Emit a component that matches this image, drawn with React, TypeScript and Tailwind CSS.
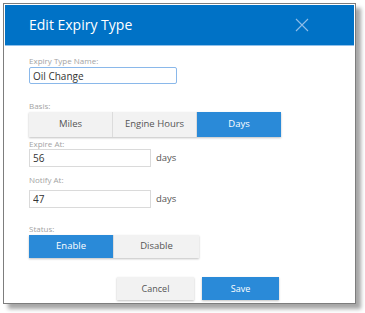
import { useState } from 'react'

const font = { fontFamily: '"Open Sans", "Noto Sans", sans-serif' }

function Segmented({ options, value, onChange, widths }: {
  options: string[]
  value: string
  onChange: (v: string) => void
  widths: string
}) {
  return (
    <div className="flex w-fit shadow-[0_1px_2px_rgba(0,0,0,0.25)]">
      {options.map((opt) => (
        <button
          key={opt}
          type="button"
          onClick={() => onChange(opt)}
          className={`${widths} text-[9.5px] border-r border-[#dcdcdc] last:border-r-0 ${
            value === opt ? 'bg-[#2a8ad8] text-white' : 'bg-[#f2f2f2] text-[#555]'
          }`}
        >
          {opt}
        </button>
      ))}
    </div>
  )
}

export default function App() {
  const [name, setName] = useState('Oil Change')
  const [basis, setBasis] = useState('Days')
  const [expire, setExpire] = useState('56')
  const [notify, setNotify] = useState('47')
  const [status, setStatus] = useState('Enable')

  return (
    <div className="w-[365px] h-[313px] bg-white pl-[3px] pt-[3px]" style={font}>
      <div className="w-[353px] h-[301px] border border-[#7d7d7d] p-px bg-white shadow-[5px_5px_4px_rgba(0,0,0,0.35)] flex flex-col">
        {/* header */}
        <div className="h-[41px] bg-[#0072c6] border-b border-[#8fc0ea] flex items-center justify-between pl-[24px] pr-[45px] shrink-0">
          <h2 className="text-white text-[14px] leading-none">Edit Expiry Type</h2>
          <button type="button" className="text-[#8fbde8]">
            <svg width="14" height="14" viewBox="0 0 14 14" stroke="currentColor" strokeWidth="1.1">
              <path d="M1 1L13 13M13 1L1 13" />
            </svg>
          </button>
        </div>

        <div className="px-[24px] flex flex-col">
          <label className="mt-[9px] text-[8px] leading-[11px] text-[#a3a3a3]">Expiry Type Name:</label>
          <input
            value={name}
            onChange={(e) => setName(e.target.value)}
            className="mt-px w-[148px] h-[17px] border border-[#8ab8ea] rounded-[2px] px-[3px] text-[10px] text-[#333] outline-none"
          />

          <label className="mt-[16px] text-[8px] leading-[11px] text-[#a3a3a3]">Basis:</label>
          <div className="mt-px">
            <Segmented options={['Miles', 'Engine Hours', 'Days']} value={basis} onChange={setBasis} widths="w-[84px] h-[25px]" />
          </div>

          <label className="mt-px text-[8px] leading-[11px] text-[#a3a3a3]">Expire At:</label>
          <div className="flex items-center gap-[5px]">
            <input
              value={expire}
              onChange={(e) => setExpire(e.target.value)}
              className="w-[122px] h-[18px] border border-[#dadada] px-[3px] text-[10px] text-[#333] outline-none"
            />
            <span className="text-[9.5px] text-[#555]">days</span>
          </div>

          <label className="mt-[7px] text-[8px] leading-[11px] text-[#a3a3a3]">Notify At:</label>
          <div className="mt-[5px] flex items-center gap-[5px]">
            <input
              value={notify}
              onChange={(e) => setNotify(e.target.value)}
              className="w-[122px] h-[18px] border border-[#dadada] px-[3px] text-[10px] text-[#333] outline-none"
            />
            <span className="text-[9.5px] text-[#555]">days</span>
          </div>

          <label className="mt-[15px] text-[8px] leading-[11px] text-[#a3a3a3]">Status:</label>
          <div className="mt-px">
            <Segmented options={['Enable', 'Disable']} value={status} onChange={setStatus} widths="w-[85px] h-[23px]" />
          </div>

          <div className="mt-[19px] flex gap-[8px] pl-[88px]">
            <button type="button" className="w-[77px] h-[23px] bg-[#f2f2f2] text-[9px] text-[#555] shadow-[0_1px_2px_rgba(0,0,0,0.25)]">
              Cancel
            </button>
            <button type="button" className="w-[77px] h-[23px] bg-[#2a8ad8] text-[9px] text-white shadow-[0_1px_2px_rgba(0,0,0,0.25)]">
              Save
            </button>
          </div>
        </div>
      </div>
    </div>
  )
}
